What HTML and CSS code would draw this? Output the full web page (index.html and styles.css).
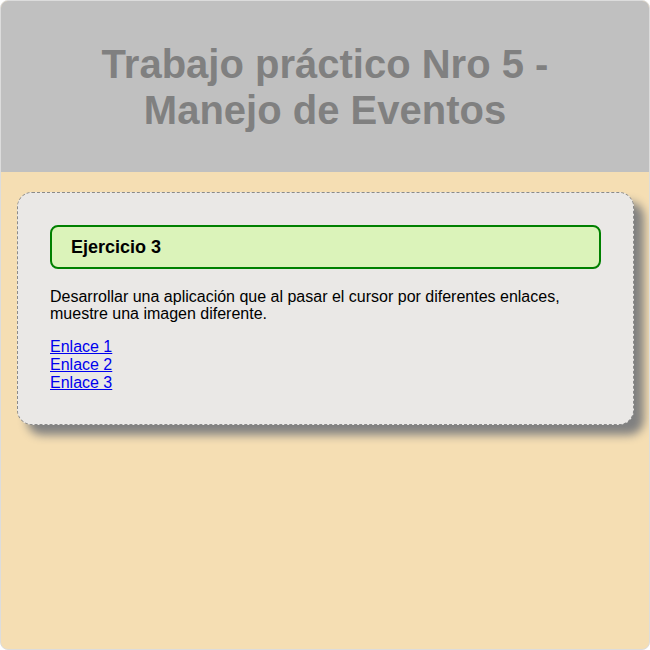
FILE: index.html
```html
<!DOCTYPE html>
<html lang="es">
<head>
<meta charset="utf-8">
<title>Trabajo práctico Nro 5</title>
<link rel="stylesheet" href="styles.css">
</head>
<body>
<div class="page">
  <header class="header">
    <h1 class="title">Trabajo práctico Nro 5 -<br>Manejo de Eventos</h1>
  </header>
  <main class="main">
    <section class="card">
      <h3 class="exercise">Ejercicio 3</h3>
      <p class="desc">Desarrollar una aplicación que al pasar el cursor por diferentes enlaces, muestre una imagen diferente.</p>
      <div class="links">
        <a href="#" class="link">Enlace 1</a>
        <a href="#" class="link">Enlace 2</a>
        <a href="#" class="link">Enlace 3</a>
      </div>
    </section>
  </main>
</div>
</body>
</html>
```

FILE: styles.css
```css
html, body {
  margin: 0;
  padding: 0;
  background: #ffffff;
}
body {
  font-family: "Liberation Sans", Arial, sans-serif;
  font-size: 16px;
  color: #000;
}
.page {
  box-sizing: border-box;
  width: 650px;
  height: 650px;
  border: 1px solid #dcdcdc;
  border-radius: 8px;
  overflow: hidden;
  display: flex;
  flex-direction: column;
  background: #f5deb3;
}
.header {
  background: #c0c0c0;
  height: 171px;
  flex: none;
  display: flex;
  align-items: center;
  justify-content: center;
}
.title {
  margin: 0;
  font-size: 40px;
  font-weight: bold;
  color: #808080;
  text-align: center;
  line-height: 46px;
}
.main {
  flex: 1;
  padding: 20px 15px 0 16px;
}
.card {
  background: #eae8e6;
  border: 1px dashed #8a8a8a;
  border-radius: 15px;
  padding: 32px;
  box-shadow: 10px 10px 10px #808080;
}
.exercise {
  margin: 0;
  background: #dbf3ba;
  border: 2px solid #008000;
  border-radius: 8px;
  padding: 10px 19px;
  font-size: 18px;
  line-height: 20px;
  font-weight: bold;
}
.desc {
  margin: 19px 0 16px;
  line-height: 17px;
}
.links {
  display: flex;
  flex-direction: column;
  align-items: flex-start;
  line-height: 18px;
}
.link {
  color: #0000ee;
}
```
